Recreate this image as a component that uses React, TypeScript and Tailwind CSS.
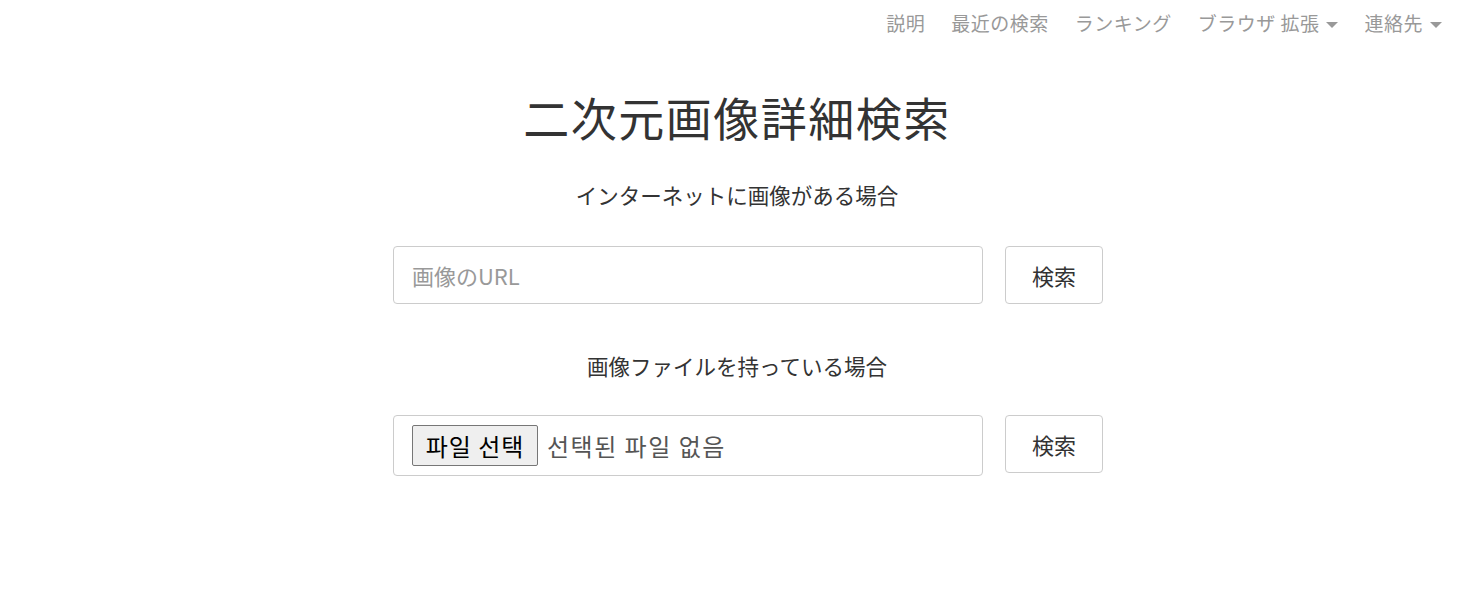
import { useState } from 'react';

const navItems = [
  { label: '説明' },
  { label: '最近の検索' },
  { label: 'ランキング' },
  { label: 'ブラウザ 拡張', dropdown: true },
  { label: '連絡先', dropdown: true },
];

function Caret() {
  return <span className="ml-[7px] mt-[3px] inline-block h-0 w-0 border-x-[6px] border-t-[6px] border-x-transparent border-t-[#999]" />;
}

export default function App() {
  const [url, setUrl] = useState('');

  return (
    <div className="min-h-[609px] bg-white text-[#333] font-['Noto_Sans_CJK_JP','Noto_Sans',sans-serif]">
      <nav className="flex justify-end gap-[26px] pr-[40px] pt-[8px] text-[19px] leading-[30px] text-[#999]">
        {navItems.map((item) => (
          <a key={item.label} className="flex items-center tracking-[0.5px]">
            {item.label}
            {item.dropdown && <Caret />}
          </a>
        ))}
      </nav>

      <main className="flex flex-col items-center">
        <h1 className="mt-[48px] pr-[8px] text-[46px] leading-[60px] tracking-[1.5px]">二次元画像詳細検索</h1>

        <p className="mt-[34px] pr-[8px] text-[21.5px] leading-[30px]">インターネットに画像がある場合</p>
        <div className="mt-[36px] flex gap-[22px] pl-[14px]">
          <input
            value={url}
            onChange={(e) => setUrl(e.target.value)}
            placeholder="画像のURL"
            className="h-[58px] w-[590px] rounded-[4px] border border-[#ccc] px-[18px] text-[22px] outline-none placeholder:text-[#999]"
          />
          <button className="h-[58px] w-[98px] rounded-[4px] border border-[#ccc] text-[22px]">検索</button>
        </div>

        <p className="mt-[47px] pr-[8px] text-[21.5px] leading-[30px]">画像ファイルを持っている場合</p>
        <div className="mt-[34px] flex items-start gap-[22px] pl-[14px]">
          <div className="flex h-[61px] w-[590px] items-center rounded-[4px] border border-[#ccc] px-[18px] text-[24px] font-['Noto_Sans_CJK_KR',sans-serif]">
            <span className="flex h-[41px] w-[126px] items-center justify-center rounded-[2px] border border-[#767676] bg-[#efefef] tracking-[1px] text-black">
              파일 선택
            </span>
            <span className="ml-[9px] tracking-[1.5px] text-[#555]">선택된 파일 없음</span>
          </div>
          <button className="h-[58px] w-[98px] rounded-[4px] border border-[#ccc] text-[22px]">検索</button>
        </div>
      </main>
    </div>
  );
}
